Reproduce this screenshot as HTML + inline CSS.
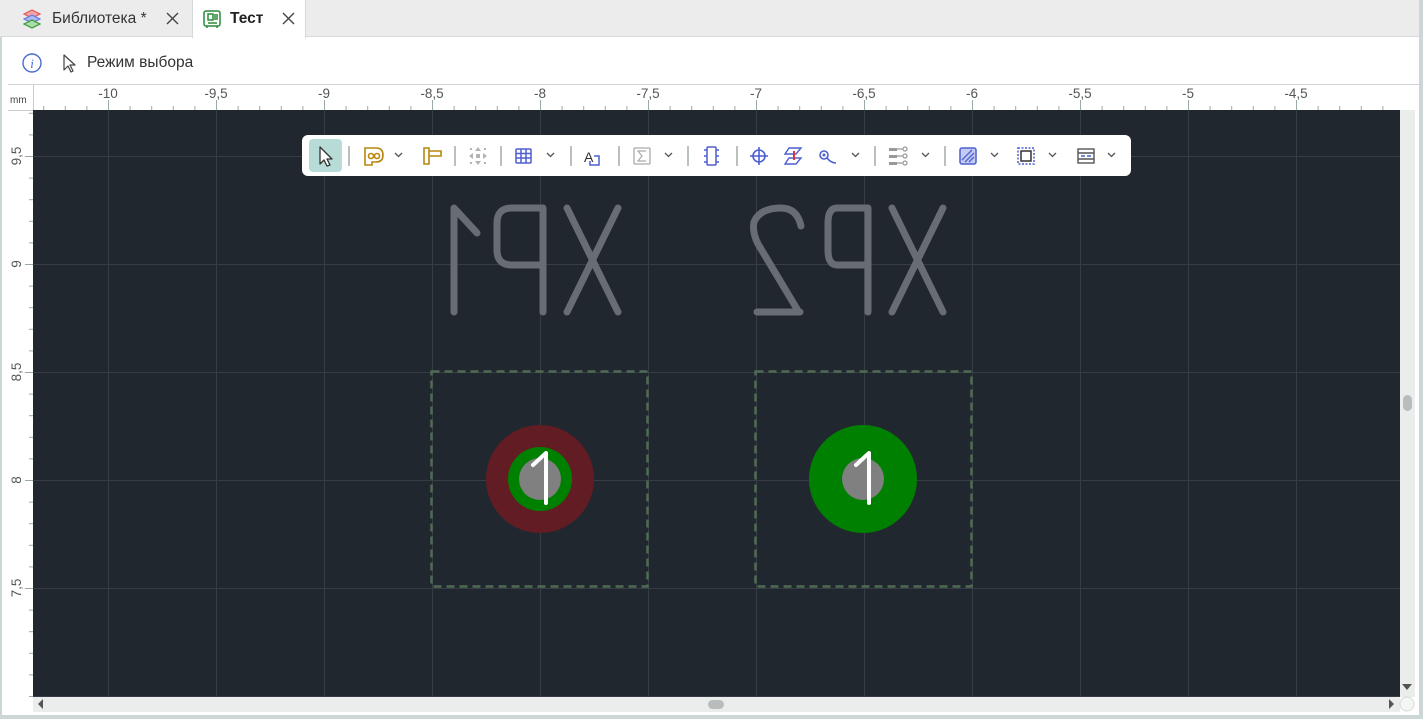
<!DOCTYPE html>
<html><head><meta charset="utf-8"><style>
*{margin:0;padding:0;box-sizing:border-box}
body{width:1423px;height:719px;overflow:hidden;background:#fff;font-family:"Liberation Sans",sans-serif;position:relative}
.tabbar{position:absolute;left:0;top:0;width:1423px;height:37px;background:#ececec;border-bottom:1px solid #d4d9d9}
.t{position:absolute;font-size:15.5px;color:#333}
</style></head><body>
<div class="tabbar"></div>
<div style="position:absolute;left:0;top:37px;width:2px;height:682px;background:#cdd6d6"></div>
<div style="position:absolute;left:1419px;top:0;width:4px;height:719px;background:#cdd6d6"></div>
<div style="position:absolute;left:0;top:715px;width:1423px;height:4px;background:#cdd6d6"></div>
<div style="position:absolute;left:192px;top:0;width:114px;height:38px;background:#fff;border-left:1px solid #d4d9d9;border-right:1px solid #d4d9d9"></div>
<div class="t" style="left:52px;top:10px">Библиотека *</div>
<div class="t" style="left:230px;top:10px;font-weight:bold;color:#222">Тест</div>
<div class="t" style="left:87px;top:54px">Режим выбора</div>

<svg width="1423" height="719" style="position:absolute;left:0;top:0" xmlns="http://www.w3.org/2000/svg">
<defs>
<pattern id="hm" x="0" y="0" width="21.6" height="10" patternUnits="userSpaceOnUse"><line x1="0.5" y1="0" x2="0.5" y2="10" stroke="#9aa" stroke-width="1"/></pattern>
<pattern id="vm" x="0" y="4.8" width="10" height="21.6" patternUnits="userSpaceOnUse"><line x1="0" y1="0.5" x2="10" y2="0.5" stroke="#9aa" stroke-width="1"/></pattern>
<pattern id="gx" x="0" y="0" width="108" height="10" patternUnits="userSpaceOnUse"><line x1="0.5" y1="0" x2="0.5" y2="10" stroke="#363d45" stroke-width="1"/></pattern>
<pattern id="gy" x="0" y="48" width="10" height="108" patternUnits="userSpaceOnUse"><line x1="0" y1="0.5" x2="10" y2="0.5" stroke="#363d45" stroke-width="1"/></pattern>
</defs>
<g transform="translate(32,20)">
<path d="M-8,-6 L0,-10 L8,-6 L0,-2Z" fill="#f3a5a5" stroke="#d55" stroke-width="1.2"/>
<path d="M-8,-1 L0,-5 L8,-1 L0,3Z" fill="#a9b8f3" stroke="#67d" stroke-width="1.2"/>
<path d="M-8,4 L0,0 L8,4 L0,8Z" fill="#a9dca9" stroke="#393" stroke-width="1.2"/>
</g>
<path d="M167,13 l11,11 M178,13 l-11,11" stroke="#444" stroke-width="1.4"/>
<path d="M283,13 l11,11 M294,13 l-11,11" stroke="#444" stroke-width="1.4"/>
<g transform="translate(212,19)" fill="none" stroke="#2a8a3a" stroke-width="1.5">
<rect x="-8" y="-8" width="16" height="15" rx="2"/><rect x="-4" y="-5" width="5" height="6"/><path d="M3,-5v6M5,-5v6M-5,7v2M5,7v2M-4,4h9"/>
</g>
<circle cx="32" cy="63" r="9" fill="none" stroke="#4a6cd4" stroke-width="1.4"/>
<text x="32" y="68" font-family="Liberation Serif" font-style="italic" font-size="13" fill="#4a6cd4" text-anchor="middle">i</text>
<path d="M64,55 L64,70 L68,66 L71,72 L73,71 L70,65 L75,65Z" fill="#fff" stroke="#444" stroke-width="1.2" stroke-linejoin="round"/>
<rect x="2" y="85" width="1417" height="25" fill="#fff"/>
<line x1="8" y1="84.5" x2="1419" y2="84.5" stroke="#d0d6d6"/>
<line x1="8" y1="110.5" x2="33" y2="110.5" stroke="#c8cece"/>
<line x1="33.5" y1="85" x2="33.5" y2="110" stroke="#c8cece"/>
<text x="10" y="103" font-size="10" fill="#444">mm</text>
<rect x="33" y="106" width="1367" height="4" fill="url(#hm)"/>
<rect x="29" y="110" width="4" height="587" fill="url(#vm)"/>
<g fill="#555" font-size="13.5" text-anchor="middle">
<text x="108" y="98">-10</text><text x="216" y="98">-9,5</text><text x="324" y="98">-9</text><text x="432" y="98">-8,5</text><text x="540" y="98">-8</text><text x="648" y="98">-7,5</text><text x="756" y="98">-7</text><text x="864" y="98">-6,5</text><text x="972" y="98">-6</text><text x="1080" y="98">-5,5</text><text x="1188" y="98">-5</text><text x="1296" y="98">-4,5</text>
</g>
<g stroke="#9aa">
<path d="M108.5,100v10M216.5,100v10M324.5,100v10M432.5,100v10M540.5,100v10M648.5,100v10M756.5,100v10M864.5,100v10M972.5,100v10M1080.5,100v10M1188.5,100v10M1296.5,100v10"/>
<path d="M25,156.5h8M25,264.5h8M25,372.5h8M25,480.5h8M25,588.5h8"/>
</g>
<g fill="#555" font-size="13.5" text-anchor="middle">
<text transform="translate(21,156) rotate(-90)">9,5</text>
<text transform="translate(21,264) rotate(-90)">9</text>
<text transform="translate(21,372) rotate(-90)">8,5</text>
<text transform="translate(21,480) rotate(-90)">8</text>
<text transform="translate(21,588) rotate(-90)">7,5</text>
</g>
<rect x="33" y="110" width="1367" height="587" fill="#21272f"/>
<rect x="33" y="110" width="1367" height="587" fill="url(#gx)"/>
<rect x="33" y="110" width="1367" height="587" fill="url(#gy)"/>
<g fill="none" stroke="#686c73" stroke-width="7" stroke-linecap="round" stroke-linejoin="round">
<path d="M454,312V208L477,233"/>
<path d="M543,312V208H512Q497,208 497,223V250Q497,265 512,265H543"/>
<path d="M567,208L618,312M618,208L567,312"/>
<path d="M800,312H757M797,309L758,244Q752,232 754,222Q760,208 781,208Q797,208 801,226"/>
<path d="M868,312V208H837Q828,208 828,223V250Q828,265 837,265H868"/>
<path d="M892,208L943,312M943,208L892,312"/>
</g>
<rect x="431.5" y="371.5" width="216" height="215" fill="none" stroke="#4f6b55" stroke-width="2.5" stroke-dasharray="8,5"/>
<rect x="755.5" y="371.5" width="216" height="215" fill="none" stroke="#4f6b55" stroke-width="2.5" stroke-dasharray="8,5"/>
<circle cx="540" cy="479" r="54" fill="#621c23"/>
<circle cx="540" cy="479" r="32" fill="#008000"/>
<circle cx="540" cy="479" r="21" fill="#808080"/>
<path d="M546,503V453L533,465" fill="none" stroke="#fff" stroke-width="4" stroke-linecap="round" stroke-linejoin="round"/>
<circle cx="863" cy="479" r="54" fill="#008000"/>
<circle cx="863" cy="479" r="21" fill="#808080"/>
<path d="M869,503V453L856,465" fill="none" stroke="#fff" stroke-width="4" stroke-linecap="round" stroke-linejoin="round"/>
<rect x="1400" y="110" width="15" height="587" fill="#ebeded"/>
<rect x="1403" y="395" width="9" height="16" rx="4.5" fill="#b8bcbc"/>
<path d="M1402,684h10l-5,6z" fill="#555"/>
<rect x="33" y="697" width="1367" height="15" fill="#ebeded"/>
<rect x="708" y="700" width="16" height="9" rx="4.5" fill="#b8bcbc"/>
<path d="M43,699v10l-5,-5z M1389,699v10l5,-5z" fill="#555"/>
<circle cx="1407" cy="704" r="7" fill="#f4f5f5" stroke="#d4d8d8"/>
<rect x="302" y="135" width="829" height="41" rx="6" fill="#fff"/>
<rect x="309" y="139" width="33" height="33" rx="4" fill="#b7dcd7"/>
<path d="M320,147 L320,164 L324,160 L327,166 L330,165 L327,159 L332,159Z" fill="#fff" stroke="#333" stroke-width="1.3" stroke-linejoin="round"/>
<g stroke="#b8c0c0" stroke-width="2"><path d="M349,146v20M455,146v20M501,146v20M571,146v20M619,146v20M688,146v20M737,146v20M875,146v20M945,146v20"/></g>
<g fill="none" stroke="#555" stroke-width="1.3"><path d="M395,153l3.5,3.5l3.5,-3.5M547,153l3.5,3.5l3.5,-3.5M665,153l3.5,3.5l3.5,-3.5M852,153l3.5,3.5l3.5,-3.5M922,153l3.5,3.5l3.5,-3.5M991,153l3.5,3.5l3.5,-3.5M1049,153l3.5,3.5l3.5,-3.5M1108,153l3.5,3.5l3.5,-3.5"/></g>
<g fill="none" stroke="#b8860b" stroke-width="1.6">
<path d="M365,148h11q7,0 7,7q0,7 -7,7h-4v3h-7z"/><circle cx="371" cy="156" r="2.5"/><circle cx="377" cy="156" r="2.5"/>
<path d="M424,148h5v16h-5z M429,151h12v5h-12"/>
</g>
<g fill="#b0b4b4"><rect x="470" y="148" width="2" height="2"/><rect x="484" y="148" width="2" height="2"/><rect x="470" y="162" width="2" height="2"/><rect x="484" y="162" width="2" height="2"/><path d="M478,147l-3,4h6zM478,165l-3,-4h6zM469,156l4,-3v6zM487,156l-4,-3v6z"/><rect x="476" y="154" width="4" height="4"/></g>
<g fill="none" stroke="#4e5fd0" stroke-width="1.5"><rect x="516" y="149" width="15" height="14" rx="1"/><path d="M521,149v14M526,149v14M516,153.5h15M516,158h15"/></g>
<text x="584" y="162" font-size="14" fill="#333">A</text>
<path d="M594,156h5v9h-9v-4" fill="none" stroke="#4e5fd0" stroke-width="1.5"/>
<rect x="634" y="148" width="16" height="16" rx="1" fill="none" stroke="#aaa" stroke-width="1.3"/>
<path d="M646,151h-8l4,5l-4,5h8" fill="none" stroke="#aaa" stroke-width="1.2"/>
<g fill="none" stroke="#4e5fd0" stroke-width="1.5"><rect x="707" y="147" width="9" height="18" rx="1"/><path d="M704,150h3M704,156h3M704,162h3M716,150h3M716,156h3M716,162h3"/></g>
<g fill="none" stroke="#4e5fd0" stroke-width="1.6"><circle cx="759" cy="156" r="6"/><path d="M759,147v18M750,156h18"/></g>
<g fill="none" stroke="#4e5fd0" stroke-width="1.4"><path d="M789,148h12l-5,6h-11zM789,158h12l-5,6h-11z"/></g>
<path d="M794,151v9" stroke="#d33" stroke-width="2"/>
<g fill="none" stroke="#4e5fd0" stroke-width="1.6"><circle cx="824" cy="155" r="4"/><path d="M827,158q4,5 9,5"/></g>
<circle cx="824" cy="155" r="1.5" fill="#4e5fd0"/>
<g fill="#999"><rect x="889" y="148" width="8" height="3"/><rect x="889" y="155" width="8" height="3"/><rect x="889" y="162" width="8" height="3"/></g>
<g fill="none" stroke="#999" stroke-width="1.2"><path d="M897,149h6M897,156h6M897,163h6"/><circle cx="905" cy="149" r="2"/><circle cx="905" cy="156" r="2"/><circle cx="905" cy="163" r="2"/></g>
<rect x="960" y="148" width="16" height="16" rx="2" fill="#c4cbf3" stroke="#4e5fd0" stroke-width="1.5"/>
<path d="M962,160l10,-10M965,162l9,-9M969,162l5,-5" stroke="#4e5fd0" stroke-width="1.3"/>
<rect x="1018" y="148" width="16" height="16" fill="none" stroke="#4e5fd0" stroke-width="1.5" stroke-dasharray="2,1.5"/>
<rect x="1021" y="151" width="10" height="10" fill="none" stroke="#333" stroke-width="1.5"/>
<g fill="none" stroke="#555" stroke-width="1.4"><rect x="1078" y="149" width="16" height="14"/><path d="M1078,153h16M1078,159h16"/></g>
<path d="M1081,156h4M1087,156h4" stroke="#4e5fd0" stroke-width="1.5"/>
</svg>
</body></html>
